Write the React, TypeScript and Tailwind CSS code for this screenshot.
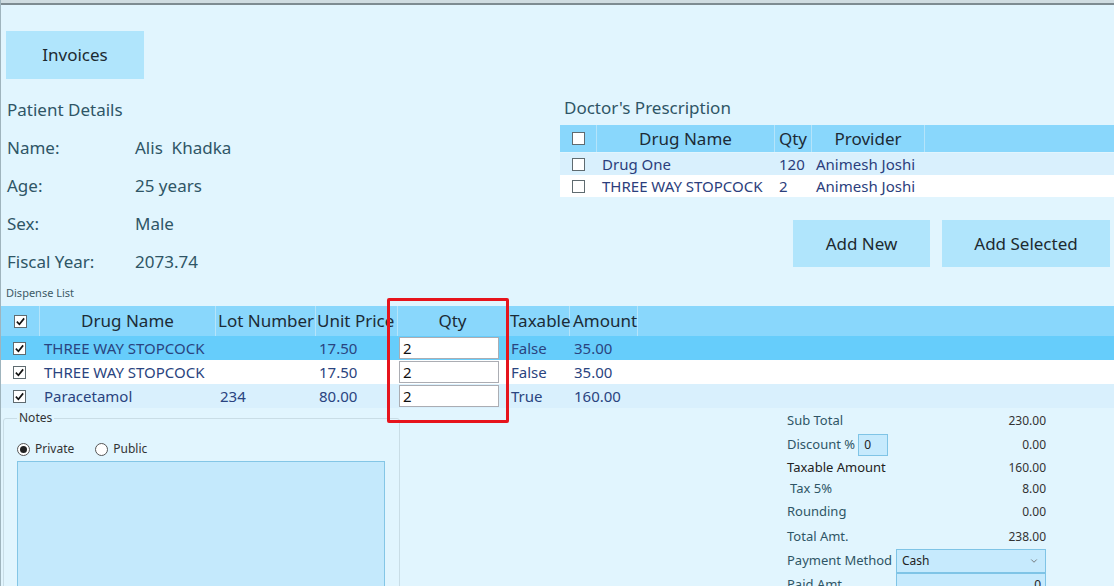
import { ChevronDown } from "lucide-react";

const dispenseRows = [
  { name: "THREE WAY STOPCOCK", lot: "", price: "17.50", qty: "2", taxable: "False", amount: "35.00", bg: "bg-[#66cdfb]" },
  { name: "THREE WAY STOPCOCK", lot: "", price: "17.50", qty: "2", taxable: "False", amount: "35.00", bg: "bg-white" },
  { name: "Paracetamol", lot: "234", price: "80.00", qty: "2", taxable: "True", amount: "160.00", bg: "bg-[#d9f0fd]" },
];

const prescriptionRows = [
  { name: "Drug One", qty: "120", provider: "Animesh Joshi", bg: "bg-[#d9f0fd]" },
  { name: "THREE WAY STOPCOCK", qty: "2", provider: "Animesh Joshi", bg: "bg-white" },
];

const patient = [
  { label: "Name:", value: "Alis  Khadka" },
  { label: "Age:", value: "25 years" },
  { label: "Sex:", value: "Male" },
  { label: "Fiscal Year:", value: "2073.74" },
];

function Check({ checked }: { checked: boolean }) {
  return (
    <span className="flex h-[13px] w-[13px] items-center justify-center border border-[#5f6b70] bg-white">
      {checked && (
        <svg viewBox="0 0 12 12" className="h-[11px] w-[11px]">
          <path d="M2 6.2 L4.8 9 L10 2.6" fill="none" stroke="#111" strokeWidth="1.8" />
        </svg>
      )}
    </span>
  );
}

function Radio({ checked }: { checked: boolean }) {
  return (
    <span className="flex h-[13px] w-[13px] items-center justify-center rounded-full border border-[#555] bg-white">
      {checked && <span className="h-[7px] w-[7px] rounded-full bg-[#222]" />}
    </span>
  );
}

export default function App() {
  return (
    <div className="relative h-[586px] w-[1114px] overflow-hidden border-l border-[#9fb4bd] bg-[#e1f5fe] text-[#2f5566] [font-family:'Noto_Sans',sans-serif]">
      <div className="h-[5px] border-b-2 border-[#7d8b91] bg-[#cfdce1]" />

      {/* upper area */}
      <div className="flex h-[276px]">
        <div className="w-[559px] pl-[5px] pt-[26px]">
          <button className="flex h-[48px] w-[138px] items-center justify-center bg-[#b0e5fc] text-[17px] text-[#1d2a30]">
            Invoices
          </button>
          <div className="mt-[12px] flex h-[38px] items-center pl-[1px] text-[17px]">Patient Details</div>
          {patient.map((p) => (
            <div key={p.label} className="flex h-[38px] items-center pl-[1px] text-[17px]">
              <span className="w-[128px]">{p.label}</span>
              <span className="whitespace-pre">{p.value}</span>
            </div>
          ))}
        </div>

        <div className="flex-1 pt-[91px]">
          <div className="flex h-[24px] items-center pl-[4px] text-[17px]">Doctor&apos;s Prescription</div>
          <div className="mt-[5px] flex h-[27px] bg-[#89d7fc] text-[17px] text-[#1c2b36]">
            <div className="flex w-[37px] items-center justify-center border-r border-[#b5e4fa]">
              <Check checked={false} />
            </div>
            <div className="flex w-[178px] items-center justify-center border-r border-[#b5e4fa]">Drug Name</div>
            <div className="flex w-[37px] items-center justify-center border-r border-[#b5e4fa]">Qty</div>
            <div className="flex w-[113px] items-center justify-center border-r border-[#b5e4fa]">Provider</div>
            <div className="flex-1" />
          </div>
          <div className="mt-[1px]">
            {prescriptionRows.map((r) => (
              <div key={r.name} className={`flex h-[22px] items-center text-[15px] text-[#2b3e7c] ${r.bg}`}>
                <div className="flex w-[37px] justify-center">
                  <Check checked={false} />
                </div>
                <div className="w-[178px] pl-[5px]">{r.name}</div>
                <div className="w-[37px] pl-[4px]">{r.qty}</div>
                <div className="pl-[4px]">{r.provider}</div>
              </div>
            ))}
          </div>
          <div className="mt-[23px] flex justify-end gap-[12px] pr-[4px]">
            <button className="flex h-[47px] w-[137px] items-center justify-center bg-[#b0e5fc] text-[17px] text-[#1d2a30]">
              Add New
            </button>
            <button className="flex h-[47px] w-[168px] items-center justify-center bg-[#b0e5fc] text-[17px] text-[#1d2a30]">
              Add Selected
            </button>
          </div>
        </div>
      </div>

      {/* dispense list */}
      <div className="flex h-[25px] items-center pl-[5px] text-[11px] text-[#3d5a66]">Dispense List</div>
      <div className="flex h-[30px] bg-[#89d7fc] text-[17px] text-[#1c2b36]">
        <div className="flex w-[39px] items-center justify-center border-r border-[#b5e4fa]">
          <Check checked />
        </div>
        <div className="flex w-[176px] items-center justify-center border-r border-[#b5e4fa]">Drug Name</div>
        <div className="flex w-[100px] items-center border-r border-[#b5e4fa] pl-[2px]">Lot Number</div>
        <div className="flex w-[82px] items-center border-r border-[#b5e4fa] pl-[1px]">Unit Price</div>
        <div className="flex w-[110px] items-center justify-center border-r border-[#b5e4fa]">Qty</div>
        <div className="flex w-[62px] items-center border-r border-[#b5e4fa] pl-[2px]">Taxable</div>
        <div className="flex w-[68px] items-center border-r border-[#b5e4fa] pl-[3px]">Amount</div>
        <div className="flex-1" />
      </div>
      {dispenseRows.map((r, i) => (
        <div key={i} className={`flex h-[24px] items-center text-[15px] text-[#2a4480] ${r.bg}`}>
          <div className="flex w-[39px] justify-center pr-[3px]">
            <Check checked />
          </div>
          <div className="w-[176px] pl-[4px]">{r.name}</div>
          <div className="w-[100px] pl-[4px]">{r.lot}</div>
          <div className="w-[82px] pl-[3px]">{r.price}</div>
          <div className="w-[110px] pl-[1px]">
            <div className="flex h-[22px] w-[100px] items-center border border-[#abadb3] bg-white pl-[3px] text-[15px] text-[#111]">
              {r.qty}
            </div>
          </div>
          <div className="w-[62px] pl-[3px]">{r.taxable}</div>
          <div className="pl-[4px]">{r.amount}</div>
        </div>
      ))}

      {/* lower area */}
      <div className="flex">
        <fieldset className="ml-[2px] mt-[1px] h-[200px] w-[397px] rounded-[3px] border border-[#c9dde6] px-[13px]">
          <legend className="px-[2px] text-[12px] text-[#333]">Notes</legend>
          <div className="mt-[13px] flex items-center gap-[5px] text-[12px] text-[#333]">
            <Radio checked />
            <span className="mr-[16px]">Private</span>
            <Radio checked={false} />
            <span>Public</span>
          </div>
          <div className="mt-[3px] h-[140px] w-[368px] border border-[#84c6e6] bg-[#c4e9fc]" />
        </fieldset>

        <div className="ml-[387px] mt-[1px] w-[259px] whitespace-nowrap">
          <div className="flex h-[24px] items-center justify-between">
            <span className="text-[13px]">Sub Total</span>
            <span className="text-[12px] text-[#333]">230.00</span>
          </div>
          <div className="flex h-[24px] items-center justify-between">
            <span className="flex items-center gap-[3px] text-[13px]">
              Discount %
              <span className="flex h-[22px] w-[30px] items-center border border-[#7fc4e6] bg-[#c6eafd] pl-[5px] text-[12px] text-[#222]">0</span>
            </span>
            <span className="text-[12px] text-[#333]">0.00</span>
          </div>
          <div className="flex h-[21px] items-center justify-between">
            <span className="text-[13px] text-[#222]">Taxable Amount</span>
            <span className="text-[12px] text-[#333]">160.00</span>
          </div>
          <div className="flex h-[22px] items-center justify-between">
            <span className="pl-[3px] text-[13px]">Tax 5%</span>
            <span className="text-[12px] text-[#333]">8.00</span>
          </div>
          <div className="flex h-[24px] items-center justify-between">
            <span className="text-[13px]">Rounding</span>
            <span className="text-[12px] text-[#333]">0.00</span>
          </div>
          <div className="flex h-[25px] items-center justify-between">
            <span className="text-[13px]">Total Amt.</span>
            <span className="text-[12px] text-[#333]">238.00</span>
          </div>
          <div className="flex h-[24px] items-center justify-between">
            <span className="text-[13px]">Payment Method</span>
            <span className="flex h-[24px] w-[150px] items-center justify-between border border-[#7fc4e6] bg-[#c6eafd] pl-[5px] pr-[6px] text-[12px] text-[#222]">
              Cash
              <ChevronDown className="h-[10px] w-[10px] text-[#666]" strokeWidth={2} />
            </span>
          </div>
          <div className="flex h-[24px] items-center justify-between">
            <span className="text-[13px]">Paid Amt.</span>
            <span className="flex h-[24px] w-[150px] items-center justify-end border border-[#7fc4e6] bg-[#c6eafd] pr-[4px] text-[12px] text-[#222]">
              0
            </span>
          </div>
        </div>
      </div>

      {/* annotation box */}
      <div className="absolute left-[386px] top-[298px] h-[125px] w-[122px] rounded-[2px] border-[3px] border-[#e6141c]" />
    </div>
  );
}
